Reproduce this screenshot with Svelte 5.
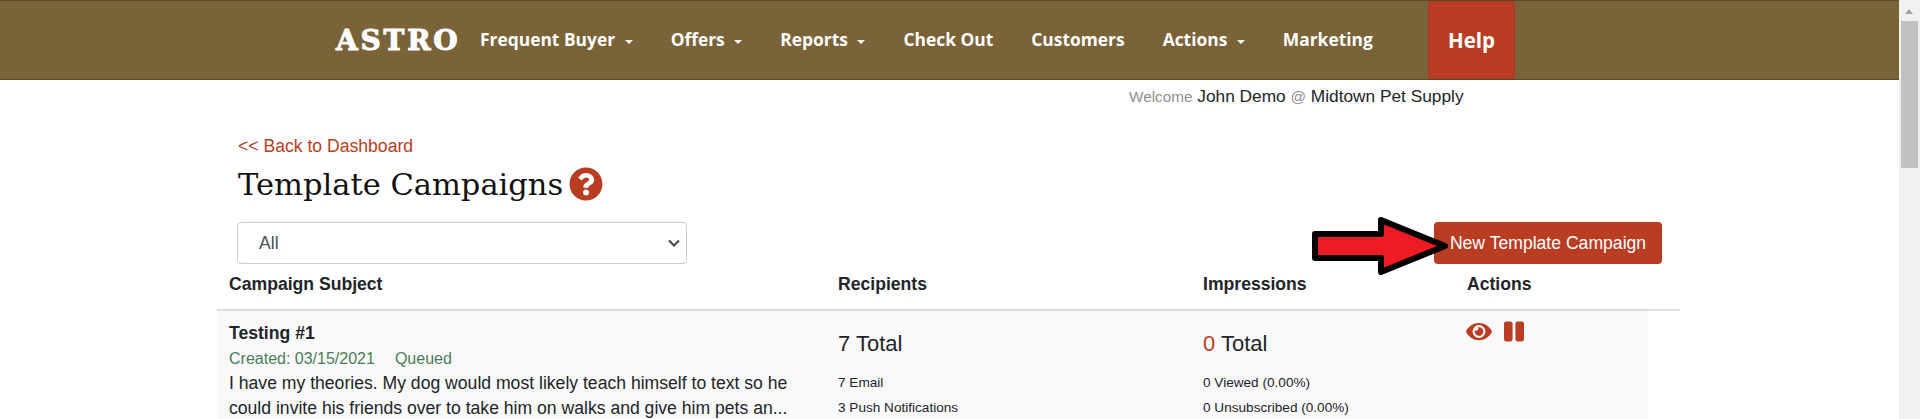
<script>
  const navItems = [
    { label: 'Frequent Buyer', caret: true },
    { label: 'Offers', caret: true },
    { label: 'Reports', caret: true },
    { label: 'Check Out' },
    { label: 'Customers' },
    { label: 'Actions', caret: true },
    { label: 'Marketing' }
  ];
</script>

<div class="page">
  <nav class="navbar">
    <span class="logo">ASTRO</span>
    <ul class="nav-links">
      {#each navItems as item}
        <li>
          {item.label}
          {#if item.caret}<span class="caret"></span>{/if}
        </li>
      {/each}
    </ul>
    <span class="help">Help</span>
  </nav>

  <p class="welcome">
    <small>Welcome</small> John Demo <small>@</small> Midtown Pet Supply
  </p>

  <main class="content">
    <a class="back" href="#top">&lt;&lt; Back to Dashboard</a>
    <h1>
      Template Campaigns
      <svg class="help-icon" viewBox="0 0 512 512" aria-hidden="true">
        <path d="M504 256c0 136.997-111.043 248-248 248S8 392.997 8 256C8 119.083 119.043 8 256 8s248 111.083 248 248zM262.655 90c-54.497 0-89.255 22.957-116.549 63.758-3.536 5.286-2.353 12.415 2.715 16.258l34.699 26.31c5.205 3.947 12.621 3.008 16.665-2.122 17.864-22.658 30.113-35.797 57.303-35.797 20.429 0 45.698 13.148 45.698 32.958 0 14.976-12.363 22.667-32.534 33.976C247.128 238.528 216 254.941 216 296v4c0 6.627 5.373 12 12 12h56c6.627 0 12-5.373 12-12v-1.333c0-28.462 83.186-29.647 83.186-106.667 0-58.002-60.165-102-116.531-102zM256 338c-25.365 0-46 20.635-46 46 0 25.364 20.635 46 46 46s46-20.636 46-46c0-25.365-20.635-46-46-46z" />
      </svg>
    </h1>

    <div class="toolbar">
      <div class="select">
        <span>All</span>
        <svg viewBox="0 0 12 8" aria-hidden="true"><path d="M1 1.5l5 5 5-5" /></svg>
      </div>
      <button type="button">New Template Campaign</button>
      <svg class="arrow" viewBox="0 0 146 66" aria-hidden="true">
        <path d="M3 17H69V3L133 29L69 55V41H3Z" />
      </svg>
    </div>

    <div class="table-head">
      <span>Campaign Subject</span>
      <span>Recipients</span>
      <span>Impressions</span>
      <span>Actions</span>
    </div>

    <div class="table-row">
      <div class="subject">
        <strong>Testing #1</strong>
        <div class="meta"><span>Created: 03/15/2021</span><span>Queued</span></div>
        <p>I have my theories. My dog would most likely teach himself to text so he could invite his friends over to take him on walks and give him pets an...</p>
      </div>
      <div class="stat">
        <div class="total">7 Total</div>
        <div class="line">7 Email</div>
        <div class="line">3 Push Notifications</div>
      </div>
      <div class="stat">
        <div class="total"><em>0</em> Total</div>
        <div class="line">0 Viewed (0.00%)</div>
        <div class="line">0 Unsubscribed (0.00%)</div>
      </div>
      <div class="actions">
        <svg class="eye" viewBox="0 0 576 512" aria-hidden="true">
          <path d="M572.52 241.4C518.29 135.59 410.93 64 288 64S57.68 135.64 3.48 241.41a32.35 32.35 0 0 0 0 29.19C57.71 376.41 165.07 448 288 448s230.32-71.64 284.52-177.41a32.35 32.35 0 0 0 0-29.19zM288 400a144 144 0 1 1 144-144 143.93 143.93 0 0 1-144 144zm0-240a95.31 95.31 0 0 0-25.31 3.79 47.85 47.85 0 0 1-66.9 66.9A95.78 95.78 0 1 0 288 160z" />
        </svg>
        <svg class="pause" viewBox="0 0 448 512" aria-hidden="true">
          <path d="M144 479H48c-26.5 0-48-21.5-48-48V79c0-26.5 21.5-48 48-48h96c26.5 0 48 21.5 48 48v352c0 26.5-21.5 48-48 48zm304-48V79c0-26.5-21.5-48-48-48h-96c-26.5 0-48 21.5-48 48v352c0 26.5 21.5 48 48 48h96c26.5 0 48-21.5 48-48z" />
        </svg>
      </div>
    </div>
  </main>

  <div class="scrollbar" aria-hidden="true">
    <span class="scroll-up"></span>
    <span class="scroll-thumb"></span>
  </div>
</div>

<style>
  :global(body) {
    margin: 0;
    overflow: hidden;
    background: #fff;
  }

  .page {
    position: relative;
    height: 419px;
    padding-right: 21px;
    overflow: hidden;
    font-family: "Liberation Sans", Arial, sans-serif;
    color: #212529;
  }

  .navbar {
    display: flex;
    align-items: center;
    box-sizing: border-box;
    height: 80px;
    padding-left: 336px;
    background: #7a6239;
    border-top: 1px solid #5e4b2c;
    border-bottom: 1px solid #5e4b2c;
  }

  .logo {
    width: 144px;
    color: #fff;
    font-family: "DejaVu Serif", serif;
    font-weight: 900;
    font-size: 28px;
    line-height: 1;
    letter-spacing: 2.8px;
    -webkit-text-stroke: 1px #fff;
    margin-top: 1px;
  }

  .nav-links {
    display: flex;
    gap: 38px;
    list-style: none;
    margin: 0 0 2px;
    padding: 0;
    color: #fff;
    font-family: "Open Sans", sans-serif;
    font-weight: 700;
    font-size: 17.4px;
  }

  .caret {
    display: inline-block;
    margin-left: 5px;
    vertical-align: 2px;
    border-top: 4px solid #fff;
    border-left: 4px solid transparent;
    border-right: 4px solid transparent;
  }

  .help {
    display: flex;
    align-items: center;
    justify-content: center;
    box-sizing: border-box;
    width: 87px;
    height: 78px;
    margin-left: auto;
    margin-right: 384px;
    color: #fff;
    background: #b83d23;
    border: 1px solid #a8391f;
    border-radius: 3px;
    font-family: "Open Sans", sans-serif;
    font-weight: 700;
    font-size: 20.5px;
  }

  .welcome {
    margin: 6px 0 0 1129px;
    font-size: 17.3px;
    line-height: 20px;
    color: #212529;
  }

  .welcome small {
    font-size: 15.3px;
    color: #8f8f8f;
  }

  .content {
    width: 1463px;
    margin-left: 217px;
  }

  .back {
    display: block;
    margin: 27px 0 0 21px;
    color: #b83d23;
    font-size: 17.6px;
    line-height: 24px;
    text-decoration: none;
  }

  h1 {
    display: flex;
    align-items: center;
    gap: 6px;
    height: 40px;
    margin: 6px 0 0 21px;
    color: #111;
    font-family: "DejaVu Serif", serif;
    font-weight: 400;
    font-size: 30.5px;
  }

  .help-icon {
    width: 34px;
    height: 34px;
    fill: #b83d23;
  }

  .toolbar {
    position: relative;
    display: flex;
    justify-content: space-between;
    height: 42px;
    margin: 18px 18px 0 20px;
  }

  .select {
    display: flex;
    align-items: center;
    justify-content: space-between;
    box-sizing: border-box;
    width: 450px;
    padding: 0 6px 0 21px;
    border: 1px solid #ccc;
    border-radius: 4px;
    color: #495057;
    font-size: 17.6px;
  }

  .select svg {
    width: 12px;
    height: 8px;
    fill: none;
    stroke: #444;
    stroke-width: 2;
  }

  button {
    width: 228px;
    border: 0;
    border-radius: 4px;
    color: #fff;
    background: #b83d23;
    font: 17.6px "Liberation Sans", Arial, sans-serif;
  }

  .arrow {
    position: absolute;
    left: 1075px;
    top: -5px;
    width: 146px;
    height: 66px;
    fill: #ed1c24;
    stroke: #000;
    stroke-width: 6;
    stroke-linejoin: round;
  }

  .table-head,
  .table-row {
    display: grid;
    grid-template-columns: 609px 365px 264px 1fr;
  }

  .table-head {
    height: 47px;
    box-sizing: border-box;
    border-bottom: 2px solid #ddd;
    font-weight: 700;
    font-size: 17.6px;
    line-height: 41px;
  }

  .table-head span {
    padding-left: 12px;
  }

  .table-row {
    width: 1431px;
    height: 120px;
    background: #f9f9f9;
    font-size: 17.6px;
    line-height: 25px;
  }

  .table-row > div {
    padding: 10px 12px 0;
  }

  .meta {
    display: flex;
    gap: 20px;
    color: #4a7c59;
    font-size: 16px;
  }

  .subject p {
    margin: 0;
  }

  .total {
    margin-top: 7px;
    font-size: 22px;
    line-height: 32px;
  }

  .total em {
    font-style: normal;
    color: #b83d23;
  }

  .stat .line {
    font-size: 13.6px;
    line-height: 25px;
  }

  .stat .total + .line {
    margin-top: 10px;
  }

  .actions {
    display: flex;
    align-items: flex-start;
    gap: 12px;
  }

  .table-row > .actions {
    padding: 9px 0 0 11px;
  }

  .eye {
    width: 26px;
    height: 23px;
    fill: #b83d23;
  }

  .pause {
    width: 20px;
    height: 23px;
    fill: #b83d23;
  }

  .scrollbar {
    position: absolute;
    top: 0;
    right: 0;
    bottom: 0;
    width: 21px;
    background: #f1f1f1;
  }

  .scroll-up {
    position: absolute;
    top: 9px;
    left: 6px;
    border-bottom: 5px solid #a3a3a3;
    border-left: 4.5px solid transparent;
    border-right: 4.5px solid transparent;
  }

  .scroll-thumb {
    position: absolute;
    top: 21px;
    left: 2px;
    width: 17px;
    height: 147px;
    background: #c1c1c1;
  }
</style>
